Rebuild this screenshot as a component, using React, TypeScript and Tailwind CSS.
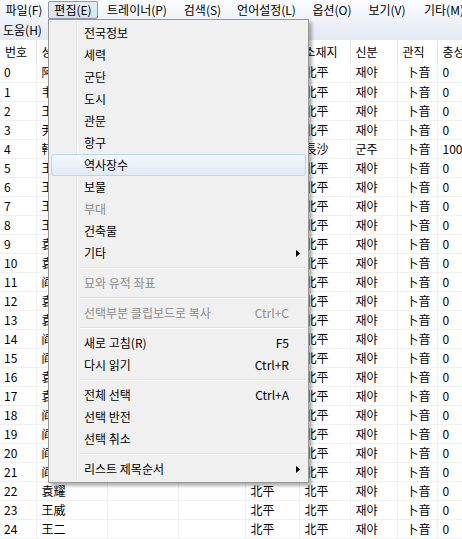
import React from 'react';

const FONT = { fontFamily: '"Noto Sans CJK KR", "Noto Sans CJK SC", sans-serif' };

const topMenus = [
    { label: '파일(F)', w: 'w-[48px]' },
    { label: '편집(E)', w: 'w-[50px]' },
    { label: '트레이너(P)', w: 'w-[78px]' },
    { label: '검색(S)', w: 'w-[53px]' },
    { label: '언어설정(L)', w: 'w-[75px]' },
    { label: '옵션(O)', w: 'w-[56px]' },
    { label: '보기(V)', w: 'w-[54px]' },
    { label: '기타(M)', w: 'w-[60px]' },
];

const names = ['阿会喃', '韦康', '王甫', '尹默', '韩玄', '王累', '王连', '王平', '王双', '袁绍', '袁术', '阎圃', '袁谭', '袁尚', '阎行', '阎柔', '袁熙', '袁胤', '阎象', '阎芝', '阎宇', '阎温', '袁耀', '王威', '王二'];

const cols = [36, 71, 71, 67, 54, 51, 47, 40, 60];
const headers = ['번호', '성명', '자', '성별', '태수', '소재지', '신분', '관직', '충성'];

type Item =
    | { sep: true }
    | { sep?: false; label: string; shortcut?: string; disabled?: boolean; sub?: boolean; hot?: boolean };

const items: Item[] = [
    { label: '전국정보' },
    { label: '세력' },
    { label: '군단' },
    { label: '도시' },
    { label: '관문' },
    { label: '항구' },
    { label: '역사장수', hot: true },
    { label: '보물' },
    { label: '부대', disabled: true },
    { label: '건축물' },
    { label: '기타', sub: true },
    { sep: true },
    { label: '묘와 유적 좌표', disabled: true },
    { sep: true },
    { label: '선택부분 클립보드로 복사', shortcut: 'Ctrl+C', disabled: true },
    { sep: true },
    { label: '새로 고침(R)', shortcut: 'F5' },
    { label: '다시 읽기', shortcut: 'Ctrl+R' },
    { sep: true },
    { label: '전체 선택', shortcut: 'Ctrl+A' },
    { label: '선택 반전' },
    { label: '선택 취소' },
    { sep: true },
    { label: '리스트 제목순서', sub: true },
];

const Arrow = () => (
    <svg width="4" height="7" viewBox="0 0 4 7" className="block">
        <path d="M0 0 L4 3.5 L0 7 Z" fill="#000" />
    </svg>
);

const EditMenu: React.FC = () => (
    <div className="absolute left-[48px] top-[19px] w-[261px] border border-[#979797] bg-[#f0f0f0] py-[2px] shadow-[3px_3px_3px_rgba(0,0,0,0.3)]">
        {/* gutter line */}
        <div className="absolute left-[27px] top-[2px] bottom-[2px] flex">
            <div className="w-px bg-[#e2e3e3]" />
            <div className="w-px bg-white" />
        </div>
        {items.map((it, i) =>
            it.sep ? (
                <div key={i} className="relative h-[8px] pl-[31px] pr-[2px] flex flex-col justify-center">
                    <div className="h-px bg-[#e0e0e0]" />
                    <div className="h-px bg-white" />
                </div>
            ) : (
                <div key={i} className="relative h-[22px] px-[2px]">
                    <div
                        className={
                            'h-full flex items-center pl-[32px] pr-[16px] rounded-[3px] border ' +
                            (it.hot
                                ? 'border-[#b8d6f0] bg-gradient-to-b from-[#f2f7fc] to-[#e1ecf8]'
                                : 'border-transparent')
                        }
                    >
                        <span className={'text-[12px] leading-none ' + (it.disabled ? 'text-[#8d8d8d]' : 'text-black')}>
                            {it.label}
                        </span>
                        <span className="ml-auto flex items-center">
                            {it.shortcut && (
                                <span className={'text-[12px] leading-none ' + (it.disabled ? 'text-[#8d8d8d]' : 'text-black')}>
                                    {it.shortcut}
                                </span>
                            )}
                            {it.sub && <span className="translate-x-[11px]"><Arrow /></span>}
                        </span>
                    </div>
                </div>
            )
        )}
    </div>
);

export default function App() {
    return (
        <div className="relative w-[462px] h-[539px] overflow-hidden bg-white text-[12px] text-black" style={FONT}>
            <div className="bg-gradient-to-b from-[#fbfcfe] to-[#e3e9f2]">
                <div className="h-[20px] flex items-center whitespace-nowrap">
                    {topMenus.map((m, i) => (
                        <div
                            key={m.label}
                            className={
                                'h-[18px] shrink-0 flex items-center justify-center leading-none ' +
                                m.w +
                                (i === 1
                                    ? ' border border-[#8d97a5] bg-gradient-to-b from-[#e9eef5] to-[#d9e1ec] rounded-[2px]'
                                    : ' border border-transparent')
                            }
                        >
                            {m.label}
                        </div>
                    ))}
                </div>
                <div className="h-[20px] flex items-center pl-[3px] leading-none">도움(H)</div>
            </div>

            <table className="table-fixed border-collapse whitespace-nowrap" style={{ width: cols.reduce((a, b) => a + b, 0) }}>
                <colgroup>
                    {cols.map((w, i) => (
                        <col key={i} style={{ width: w }} />
                    ))}
                </colgroup>
                <thead>
                    <tr className="h-[23px]">
                        {headers.map(h => (
                            <th key={h} className="font-normal text-left pl-[5px] border-r border-[#e5e5e5] overflow-hidden leading-none">
                                {h}
                            </th>
                        ))}
                    </tr>
                </thead>
                <tbody>
                    {names.map((n, i) => {
                        const cells = [
                            String(i),
                            n,
                            '',
                            '',
                            '北平',
                            i === 4 ? '長沙' : '北平',
                            i === 4 ? '군주' : '재야',
                            '卜音',
                            i === 4 ? '100' : '0',
                        ];
                        return (
                            <tr key={i} className="h-[19px]">
                                {cells.map((c, j) => (
                                    <td
                                        key={j}
                                        className={
                                            'border-r border-b border-[#f0f0f0] overflow-hidden leading-none ' +
                                            (j === 7 ? 'pl-[9px]' : j === 0 ? 'pl-[4px]' : 'pl-[5px]')
                                        }
                                    >
                                        {c}
                                    </td>
                                ))}
                            </tr>
                        );
                    })}
                </tbody>
            </table>

            <EditMenu />
        </div>
    );
}
